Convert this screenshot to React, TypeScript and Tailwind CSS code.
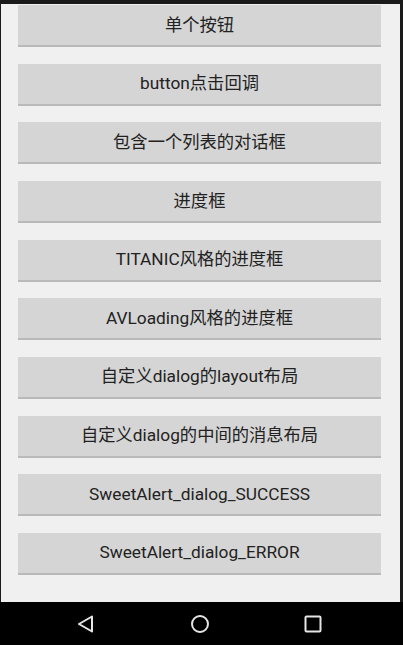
const items = [
  "单个按钮",
  "button点击回调",
  "包含一个列表的对话框",
  "进度框",
  "TITANIC风格的进度框",
  "AVLoading风格的进度框",
  "自定义dialog的layout布局",
  "自定义dialog的中间的消息布局",
  "SweetAlert_dialog_SUCCESS",
  "SweetAlert_dialog_ERROR",
];

function NavBar() {
  return (
    <div className="h-[43px] bg-black flex items-center text-[#e6e6e6]">
      <div className="w-[172px] flex justify-center">
        <svg width="18" height="18" viewBox="0 0 18 18" fill="none" stroke="currentColor" strokeWidth="2" strokeLinejoin="round">
          <path d="M15 1.5 L2 9 L15 16.5 Z" />
        </svg>
      </div>
      <div className="w-[56px] flex justify-center">
        <svg width="20" height="20" viewBox="0 0 20 20" fill="none" stroke="currentColor" strokeWidth="2">
          <circle cx="10" cy="10" r="8" />
        </svg>
      </div>
      <div className="w-[170px] flex justify-center">
        <svg width="18" height="18" viewBox="0 0 18 18" fill="none" stroke="currentColor" strokeWidth="2" strokeLinejoin="round">
          <rect x="1.5" y="1.5" width="15" height="15" rx="1" />
        </svg>
      </div>
    </div>
  );
}

export default function App() {
  return (
    <div
      className="w-[403px] h-[645px] flex flex-col bg-[#1a1a1a] overflow-hidden"
      style={{ fontFamily: "Roboto, 'Noto Sans CJK SC', sans-serif" }}
    >
      <div className="h-[4px] bg-[#1a1a1a]" />
      <div className="flex-1 bg-[#f0f0f0] border-l-[1px] border-r-[3px] border-[#1a1a1a] pl-[17px] pr-[19px] pt-[1px]">
        <div className="flex flex-col gap-[16.67px]">
          {items.map((t) => (
            <div
              key={t}
              className="h-[42px] bg-[#d5d5d5] border-b-[2px] border-[#b9b9b9] flex items-center justify-center pt-[1px] text-[17.3px] text-[#222222]"
            >
              {t}
            </div>
          ))}
        </div>
      </div>
      <NavBar />
    </div>
  );
}
